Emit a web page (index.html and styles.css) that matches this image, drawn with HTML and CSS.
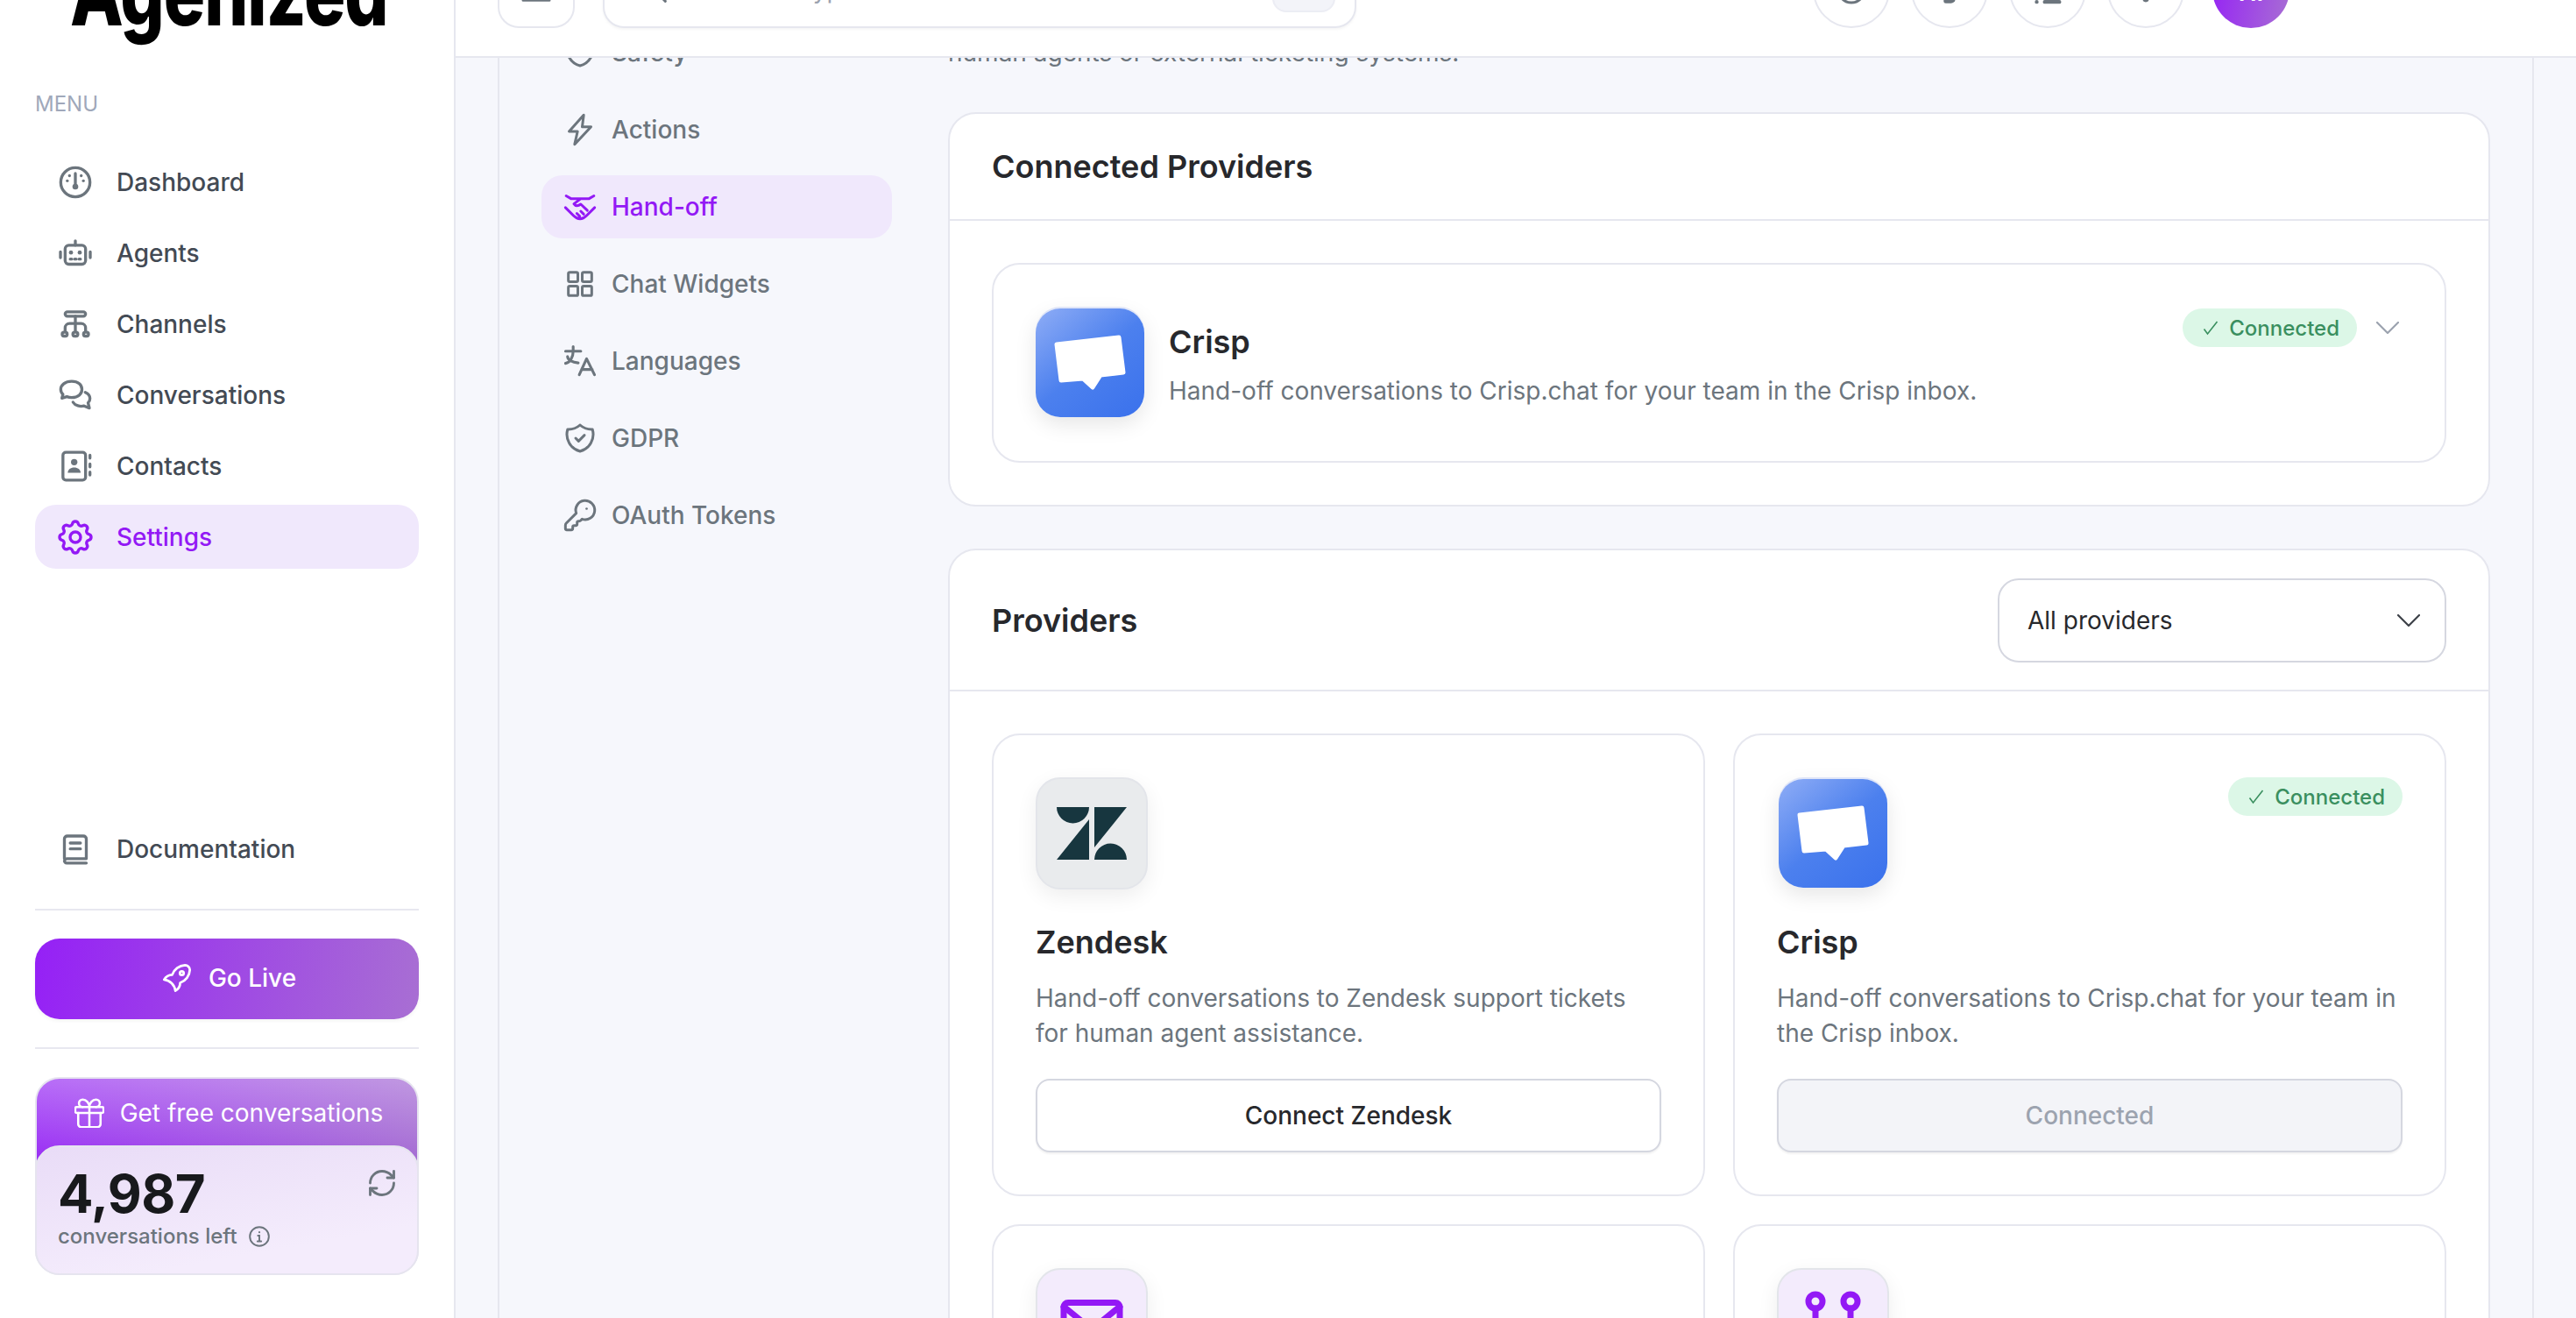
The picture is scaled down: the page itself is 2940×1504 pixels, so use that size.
FILE: index.html
```html
<!DOCTYPE html>
<html lang="en">
<head>
    <meta charset="UTF-8">
    <title>Hand-off</title>
    <link rel="stylesheet" href="styles.css">
</head>
<body>
<div class="shell">
    <aside class="sidebar">
        <div class="logo"><span>Agenized</span></div>
        <div class="menu-label">MENU</div>
        <nav class="nav">
            <a class="nav-item">
                <svg class="ico" viewBox="0 0 24 24"><circle cx="12" cy="12" r="10"/><path d="M12 6v8"/><circle class="dot" cx="12" cy="15" r="2"/><circle class="dot" cx="6.500" cy="11" r="1"/><circle class="dot" cx="8" cy="7.500" r="1"/><circle class="dot" cx="16" cy="7.500" r="1"/><circle class="dot" cx="17.500" cy="11" r="1"/></svg>
                Dashboard
            </a>
            <a class="nav-item">
                <svg class="ico" viewBox="0 0 24 24"><rect x="5" y="6.500" width="14" height="13" rx="2.500"/><path d="M12 3.500v3M1.800 11v4M22.200 11v4M8.500 16h1M11.500 16h1M14.500 16h1"/><circle class="dot" cx="9" cy="11.500" r="1.400"/><circle class="dot" cx="15" cy="11.500" r="1.400"/></svg>
                Agents
            </a>
            <a class="nav-item">
                <svg class="ico" viewBox="0 0 24 24"><rect x="5" y="3.500" width="14" height="3" rx="1.500"/><path d="M12 6.500V17M5 17v-2.500a3 3 0 0 1 3-3h8a3 3 0 0 1 3 3V17"/><rect x="3" y="17.500" width="3.400" height="2.600" rx="1.200"/><rect x="10.300" y="17.500" width="3.400" height="2.600" rx="1.200"/><rect x="17.600" y="17.500" width="3.400" height="2.600" rx="1.200"/></svg>
                Channels
            </a>
            <a class="nav-item">
                <svg class="ico" viewBox="0 0 24 24"><path d="M9.500 2.500C5 2.500 2 5 2 8c0 1.300.5 2.500 1.500 3.400L2.800 14l3.400-1c1 .4 2.100.6 3.300.6 4.500 0 7-2.500 7-5.600s-2.500-5.500-7-5.500z"/><path d="M18.800 10c2 .9 3.200 2.400 3.200 4.200 0 1.100-.5 2.200-1.300 3l.9 3.600-3.600-1.500c-2.800.7-6.200-.2-7.600-2.500"/></svg>
                Conversations
            </a>
            <a class="nav-item">
                <svg class="ico" viewBox="0 0 24 24"><rect x="3.500" y="2.500" width="15.500" height="19" rx="2"/><circle class="dot" cx="11.200" cy="9.200" r="2.200"/><path class="dot" d="M6.800 16.500c0-2.300 2-3.600 4.400-3.600s4.400 1.300 4.400 3.600z"/><path d="M22 4.500v2M22 10.500v2M22 16v2"/></svg>
                Contacts
            </a>
            <a class="nav-item active">
                <svg class="ico gear" viewBox="2 2 20 20"><path d="M10.325 4.317c.426-1.756 2.924-1.756 3.350 0a1.724 1.724 0 0 0 2.573 1.066c1.543-.94 3.310.826 2.370 2.370a1.724 1.724 0 0 0 1.065 2.572c1.756.426 1.756 2.924 0 3.350a1.724 1.724 0 0 0-1.066 2.573c.94 1.543-.826 3.310-2.370 2.370a1.724 1.724 0 0 0-2.572 1.065c-.426 1.756-2.924 1.756-3.350 0a1.724 1.724 0 0 0-2.573-1.066c-1.543.94-3.310-.826-2.370-2.370a1.724 1.724 0 0 0-1.065-2.572c-1.756-.426-1.756-2.924 0-3.350a1.724 1.724 0 0 0 1.066-2.573c-.94-1.543.826-3.310 2.370-2.370 1 .608 2.296.07 2.572-1.065z"/><circle cx="12" cy="12" r="3"/></svg>
                Settings
            </a>
        </nav>
        <div class="side-bottom">
            <a class="nav-item">
                <svg class="ico" viewBox="0 0 24 24"><path d="M4.500 18.500V5a2 2 0 0 1 2-2h11a2 2 0 0 1 2 2v13.500H6.500a2 2 0 0 0-2 1.500 1.500 1.500 0 0 0 1.500 1.500h13.500"/><path d="M8.500 7.800h7M8.500 11.800h7"/></svg>
                Documentation
            </a>
            <div class="side-line"></div>
            <a class="go-live">
                <svg class="ico" viewBox="0 0 24 24"><path d="M4 13a8 8 0 0 1 7 7 6 6 0 0 0 3-5 9 9 0 0 0 6-8 3 3 0 0 0-3-3 9 9 0 0 0-8 6 6 6 0 0 0-5 3"/><circle cx="15" cy="9" r="1.200"/></svg>
                Go Live
            </a>
            <div class="side-line"></div>
            <div class="credit">
                <div class="credit-head">
                    <svg class="ico" viewBox="2 2 20 20"><rect x="2.500" y="8" width="19" height="4" rx="1"/><path d="M12 8v13.500M19.500 12v7.500a2 2 0 0 1-2 2h-11a2 2 0 0 1-2-2V12M7.500 8a2.500 2.500 0 0 1 0-5C10 3 12 5.500 12 8c0-2.500 2-5 4.500-5a2.500 2.500 0 0 1 0 5"/></svg>
                    Get free conversations
                </div>
                <div class="credit-body">
                    <div class="credit-main">
                        <div class="credit-num">4,987</div>
                        <div class="credit-sub">conversations left
                            <svg class="ico-info" viewBox="0 0 24 24"><circle cx="12" cy="12" r="10"/><path d="M10.500 11H12v6M10 17h4"/><circle class="dot" cx="12" cy="7.500" r="1"/></svg>
                        </div>
                    </div>
                    <svg class="ico-refresh" viewBox="0 0 24 24"><path d="M3 12a9 9 0 0 1 9-9 9.750 9.750 0 0 1 6.740 2.740L21 8"/><path d="M21 3v5h-5"/><path d="M21 12a9 9 0 0 1-9 9 9.750 9.750 0 0 1-6.740-2.740L3 16"/><path d="M8 16H3v5"/></svg>
                </div>
            </div>
        </div>
    </aside>

    <div class="main">
        <header class="topbar">
            <div class="top-left">
                <button class="square-btn">
                    <svg class="ico" viewBox="0 0 24 24"><path d="M3 6h18M3 12h18M3 19.400h18"/></svg>
                </button>
                <div class="search">
                    <svg class="ico" viewBox="0 0 24 24"><circle cx="11" cy="11" r="7"/><path d="M20 20l-4-4"/></svg>
                    <span class="search-text">Search or type command...</span>
                    <span class="kbd"></span>
                </div>
            </div>
            <div class="top-right">
                <button class="round-btn"><svg class="ico" viewBox="0 0 24 24"><circle cx="12" cy="12" r="9"/></svg></button>
                <button class="round-btn"><svg class="ico" viewBox="0 0 24 24"><path class="dot" d="M8 17h8v1.500a3 3 0 0 1-3 3H9.500A1.500 1.500 0 0 1 8 20z"/></svg></button>
                <button class="round-btn"><svg class="ico" viewBox="0 0 24 24"><path d="M10 20.500h10M4.500 20.500h.01" stroke-width="2.600"/></svg></button>
                <button class="round-btn"><svg class="ico" viewBox="0 0 24 24"><path class="dot" d="M9.800 18.500h4.400a2.200 2.200 0 0 1-4.400 0z"/></svg></button>
                <div class="avatar">HI</div>
            </div>
        </header>

        <div class="content">
            <div class="settings">
                <nav class="subnav">
                    <a class="sub-item">
                        <svg class="ico" viewBox="0 0 24 24"><path d="M12 3a12 12 0 0 0 8.500 3 12 12 0 0 1-8.500 15A12 12 0 0 1 3.500 6 12 12 0 0 0 12 3"/></svg>
                        Safety
                    </a>
                    <a class="sub-item">
                        <svg class="ico" viewBox="0 0 24 24"><path d="M14.500 2 4.500 13.200h5.800L8.300 22 19.500 10h-6z"/></svg>
                        Actions
                    </a>
                    <a class="sub-item active">
                        <svg class="ico" viewBox="0 0 24 24"><path d="M2.500 4.500 6 6.500h12l3.500-2M2 12.500l5.500 5.500c3 3 6 3 9 0l5.500-5.500M12 6.800 7.800 10c1.200 1.800 3 1.500 4.700.2l4.500 4.300M14.500 17l-2-2M11.800 18.500l-2-2"/></svg>
                        Hand-off
                    </a>
                    <a class="sub-item">
                        <svg class="ico" viewBox="0 0 24 24"><rect x="4" y="4" width="6.500" height="6.500" rx="1"/><rect x="13.500" y="4" width="6.500" height="6.500" rx="1"/><rect x="4" y="13.500" width="6.500" height="6.500" rx="1"/><rect x="13.500" y="13.500" width="6.500" height="6.500" rx="1"/></svg>
                        Chat Widgets
                    </a>
                    <a class="sub-item">
                        <svg class="ico" viewBox="0.500 0.500 23 23"><path d="M2.500 5.500h10M7.500 2.500v3c0 4.400-2.200 7.500-5 8M3.800 9c0 2.100 3 4 7 4.200M11.500 21l4.800-10.500L21.500 21M20 17.500h-7"/></svg>
                        Languages
                    </a>
                    <a class="sub-item">
                        <svg class="ico" viewBox="0 0 24 24"><path d="M12 3a12 12 0 0 0 8.500 3 12 12 0 0 1-8.500 15A12 12 0 0 1 3.500 6 12 12 0 0 0 12 3"/><path d="M9 12l2 2 4-4"/></svg>
                        GDPR
                    </a>
                    <a class="sub-item">
                        <svg class="ico" viewBox="0 0 24 24"><path d="M2.586 17.414A2 2 0 0 0 2 18.828V21a1 1 0 0 0 1 1h3a1 1 0 0 0 1-1v-1a1 1 0 0 1 1-1h1a1 1 0 0 0 1-1v-1a1 1 0 0 1 1-1h.172a2 2 0 0 0 1.414-.586l.814-.814a6.500 6.500 0 1 0-4-4z"/><circle class="dot" cx="16.500" cy="7.500" r=".8"/></svg>
                        OAuth Tokens
                    </a>
                </nav>

                <section class="page">
                    <p class="intro">human agents or external ticketing systems.</p>

                    <div class="panel">
                        <div class="panel-head">
                            <h2>Connected Providers</h2>
                        </div>
                        <div class="panel-body">
                            <div class="conn-card">
                                <div class="brand crisp">
                                    <svg viewBox="0 0 124 124"><path class="bubble" d="M24 41 95 33 100 73 74 76 65 90 54 80 29 82z"/></svg>
                                </div>
                                <div class="conn-text">
                                    <h3>Crisp</h3>
                                    <p>Hand-off conversations to Crisp.chat for your team in the Crisp inbox.</p>
                                </div>
                                <div class="conn-side">
                                    <span class="badge"><svg viewBox="0 0 18 18"><path d="M1.500 10.500 5.500 16 16.500 2"/></svg>Connected</span>
                                    <svg class="chev" viewBox="0 0 26 14"><path d="M1 1l12 12L25 1"/></svg>
                                </div>
                            </div>
                        </div>
                    </div>

                    <div class="panel">
                        <div class="panel-head tall">
                            <h2>Providers</h2>
                            <div class="select">
                                All providers
                                <svg viewBox="0 0 26 14"><path d="M1 1l12 12L25 1"/></svg>
                            </div>
                        </div>
                        <div class="panel-body grid">
                            <div class="prov-card">
                                <div class="prov-top">
                                    <div class="brand boxed">
                                        <svg class="zendesk" viewBox="0 0 80 60"><path d="M0 0h37a18.500 18.500 0 0 1-37 0zM37 14v46H0zM43 46V0h37zM43 60a18.500 18.500 0 0 1 37 0z"/></svg>
                                    </div>
                                </div>
                                <h3>Zendesk</h3>
                                <p>Hand-off conversations to Zendesk support tickets for human agent assistance.</p>
                                <button class="prov-btn">Connect Zendesk</button>
                            </div>
                            <div class="prov-card">
                                <div class="prov-top">
                                    <div class="brand crisp small">
                                        <svg viewBox="0 0 124 124"><path class="bubble" d="M24 41 95 33 100 73 74 76 65 90 54 80 29 82z"/></svg>
                                    </div>
                                    <span class="badge"><svg viewBox="0 0 18 18"><path d="M1.500 10.500 5.500 16 16.500 2"/></svg>Connected</span>
                                </div>
                                <h3>Crisp</h3>
                                <p>Hand-off conversations to Crisp.chat for your team in the Crisp inbox.</p>
                                <button class="prov-btn off">Connected</button>
                            </div>
                            <div class="prov-card">
                                <div class="prov-top">
                                    <div class="brand boxed lilac">
                                        <svg class="mail" viewBox="0 0 80 100"><rect x="8" y="25.500" width="64" height="49" rx="5"/><path d="M8 30l32 26 32-26"/></svg>
                                    </div>
                                </div>
                            </div>
                            <div class="prov-card">
                                <div class="prov-top">
                                    <div class="brand boxed lilac">
                                        <svg class="hook" viewBox="0 0 80 100"><circle cx="20" cy="24" r="8"/><circle cx="60" cy="24" r="8"/><path d="M20 32v48M60 32v12c0 10-8 16-18 20"/></svg>
                                    </div>
                                </div>
                            </div>
                        </div>
                    </div>
                </section>
            </div>
        </div>
    </div>
</div>
</body>
</html>
```

FILE: styles.css
```css
*{box-sizing:border-box}
h2,h3,p{margin:0;padding:0}
a,button{cursor:pointer}
html,body{height:100%}
body{margin:0;overflow:hidden;background:#f6f7fc;font-family:Inter,"Liberation Sans",sans-serif;color:#27282c}

.shell{display:flex;height:1592px;margin-top:-88px}

.ico{width:40px;height:40px;flex:none;fill:none;stroke:#6c757d;stroke-width:1.800;stroke-linecap:round;stroke-linejoin:round}
.ico .dot,.dot{fill:#6c757d;stroke:none}

/* sidebar */
.sidebar{width:520px;flex:none;display:flex;flex-direction:column;padding:49px 40px 49px;background:#fff;border-right:2px solid #e6e7ef}
.logo{margin:0 0 61px 40px;font-size:79px;line-height:79px;font-weight:800;letter-spacing:-1px;color:#000}
.logo span{display:inline-block;transform:scaleY(1.3);transform-origin:0 68px}
.menu-label{margin-bottom:34px;font-size:24px;line-height:36px;color:#a0a8ba}
.nav{display:flex;flex-direction:column;gap:8px}
.nav-item{display:flex;align-items:center;gap:27px;height:73px;padding-left:26px;border-radius:24px;font-size:28px;font-weight:500;color:#434a54}
.nav-item .ico{stroke-width:2}
.nav-item .gear{stroke-width:1.700}
.nav-item.active{background:#f0e8fc;color:#9319f5}
.nav-item.active .ico{stroke:#9319f5}
.side-bottom{margin-top:auto;display:flex;flex-direction:column}
.side-line{height:2px;margin:32px 0;background:#e8e8f0}
.go-live{display:flex;align-items:center;justify-content:center;gap:14px;height:92px;padding-bottom:2px;border-radius:28px;background:linear-gradient(100deg,#9520f6,#a86fd3);font-size:28px;font-weight:500;color:#fff;box-shadow:0 2px 4px rgba(0,0,0,.05)}
.go-live .ico{width:44px;height:44px;stroke:#fff;stroke-width:1.500}
.credit{display:flex;flex-direction:column;height:226px;border-radius:28px;border:2px solid #e6e4ef;background:linear-gradient(rgba(255,255,255,.3),rgba(255,255,255,0) 90px),linear-gradient(95deg,#9a2ff5,#a56dd3);background-size:100% 110px;background-repeat:no-repeat}
.credit-head{display:flex;align-items:center;justify-content:center;gap:18px;height:76px;padding:2px 0 0 4px;font-size:28px;color:#fff}
.credit-head .ico{width:34px;height:34px;stroke:#fff;stroke-width:1.500}
.credit-body{flex:1;display:flex;justify-content:space-between;margin:0 -2px -2px;padding:21px 22px 0 24px;border:2px solid #e6e4ef;border-radius:28px;background:linear-gradient(170deg,#e9dcf7,#f4ecfc 75%)}
.credit-num{font-size:60px;line-height:64px;font-weight:700;letter-spacing:-.5px;color:#18191c}
.credit-sub{display:flex;align-items:center;gap:12px;margin-top:1px;font-size:24px;line-height:32px;font-weight:500;color:#6c757d}
.ico-info{width:26px;height:26px;fill:none;stroke:#6c757d;stroke-width:1.800;stroke-linecap:round}
.ico-info .dot{fill:#6c757d;stroke:none}
.ico-refresh{width:36px;height:36px;margin-top:2px;fill:none;stroke:#6c757d;stroke-width:1.900;stroke-linecap:round;stroke-linejoin:round}

/* top bar */
.main{flex:1;min-width:0;display:flex;flex-direction:column}
.topbar{flex:none;position:relative;z-index:2;display:flex;align-items:center;justify-content:space-between;height:154px;padding:0 327px 0 48px;background:#fff;border-bottom:2px solid #e6e7ef}
.top-left,.top-right{display:flex;align-items:center}
.top-left{gap:32px}
.top-right{gap:24px}
.square-btn{width:88px;height:88px;padding:0;display:flex;align-items:center;justify-content:center;background:#fff;border:2px solid #e6e7ef;border-radius:24px}
.search{display:flex;align-items:center;gap:16px;width:860px;height:88px;padding:0 22px 0 36px;background:#fff;border:2px solid #e6e7ef;border-radius:24px;box-shadow:0 2px 3px rgba(0,0,0,.04)}
.search-text{flex:1;font-size:28px;color:#9ca3af}
.kbd{width:72px;height:52px;background:#f3f4f9;border:2px solid #ecedf4;border-radius:16px}
.round-btn{width:88px;height:88px;padding:0;display:flex;align-items:center;justify-content:center;background:#fff;border:2px solid #e6e7ef;border-radius:50%}
.avatar{width:88px;height:88px;margin-left:8px;padding-top:6px;display:flex;align-items:center;justify-content:center;border-radius:50%;background:linear-gradient(100deg,#9520f6,#a86fd3);font-size:28px;font-weight:600;color:#fff}

/* settings */
.content{flex:1;min-height:0;overflow:hidden;padding:0 48px}
.settings{display:flex;gap:64px;margin-top:-42px;min-height:1600px;padding:0 48px;border-left:2px solid #e6e7ef;border-right:2px solid #e6e7ef}
.subnav{width:400px;flex:none;display:flex;flex-direction:column;gap:16px}
.sub-item{display:flex;align-items:center;gap:16px;height:72px;padding-left:24px;border-radius:24px;font-size:28px;font-weight:500;color:#6c757d}
.sub-item.active{background:#f0e8fc;color:#9319f5}
.sub-item.active .ico{stroke:#9319f5}
.page{flex:1;min-width:0;padding-top:16px}
.intro{margin-bottom:48px;font-size:28px;line-height:40px;color:#6c757d}

.panel{margin-bottom:48px;background:#fff;border:2px solid #e6e7ef;border-radius:32px}
.panel-head{display:flex;align-items:center;justify-content:space-between;height:122px;padding:0 48px;border-bottom:2px solid #e6e7ef}
.panel-head.tall{height:161px}
.panel-head h2{font-size:36px;line-height:52px;font-weight:600;color:#27282c}
.panel-body{padding:48px}
.select{display:flex;align-items:center;justify-content:space-between;width:512px;height:96px;padding:0 28px 0 32px;border:2px solid #d5d7e0;border-radius:24px;font-size:28px;color:#27282c}
.select svg{width:26px;height:14px;fill:none;stroke:#3d4148;stroke-width:2.200;stroke-linecap:round;stroke-linejoin:round}

.brand{flex:none;display:flex;align-items:center;justify-content:center;border-radius:28px}
.crisp{width:124px;height:124px;background:linear-gradient(140deg,#8fadf6,#4c80ee 50%,#3a71ec);box-shadow:0 -2px 0 #dfe5f8,0 8px 24px rgba(0,0,0,.1)}
.crisp.small{margin:2px 0 2px 2px}
.crisp svg{width:124px;height:124px}
.bubble{fill:#fff;stroke:#fff;stroke-width:5;stroke-linejoin:round}
.boxed{width:128px;height:128px;background:#e9ebed;border:2px solid #e3e5ea;box-shadow:0 8px 24px rgba(0,0,0,.07)}
.boxed.lilac{background:#f3ebfc}
.zendesk{width:80px;height:60px;fill:#17363f}
.mail,.hook{width:80px;height:100px;fill:none;stroke:#9319f5;stroke-width:7;stroke-linecap:round;stroke-linejoin:round}

.conn-card{display:flex;gap:28px;height:228px;padding:50px 52px 50px 48px;border:2px solid #e6e7ef;border-radius:32px}
.conn-text{flex:1;padding-top:10px}
.conn-text h3{margin-bottom:8px;font-size:36px;line-height:56px;font-weight:600}
.conn-text p{font-size:28px;line-height:40px;color:#6c757d}
.conn-side{display:flex;align-items:center;gap:22px;align-self:flex-start}
.badge{display:flex;align-items:center;gap:12px;height:44px;padding:0 20px 0 23px;border-radius:22px;background:#dcf7e7;font-size:24px;font-weight:500;color:#3a8f5f}
.badge svg{width:18px;height:18px;fill:none;stroke:#3a8f5f;stroke-width:1.600}
.chev{width:26px;height:14px;fill:none;stroke:#9ca3af;stroke-width:2.200;stroke-linecap:round;stroke-linejoin:round}

.grid{display:grid;grid-template-columns:1fr 1fr;gap:32px}
.prov-card{height:528px;padding:48px;border:2px solid #e6e7ef;border-radius:32px}
.prov-top{display:flex;justify-content:space-between;align-items:flex-start;height:128px;margin-bottom:32px}
.prov-card h3{margin-bottom:16px;font-size:36px;line-height:56px;font-weight:600}
.prov-card p{height:80px;margin-bottom:32px;font-size:28px;line-height:40px;color:#6c757d}
.prov-btn{display:block;width:100%;height:84px;background:#fff;border:2px solid #d5d7e0;border-radius:16px;box-shadow:0 2px 2px rgba(0,0,0,.05);font-family:inherit;font-size:28px;font-weight:500;color:#27282c}
.prov-btn.off{background:#f3f4f8;color:#9ca3af}
```
